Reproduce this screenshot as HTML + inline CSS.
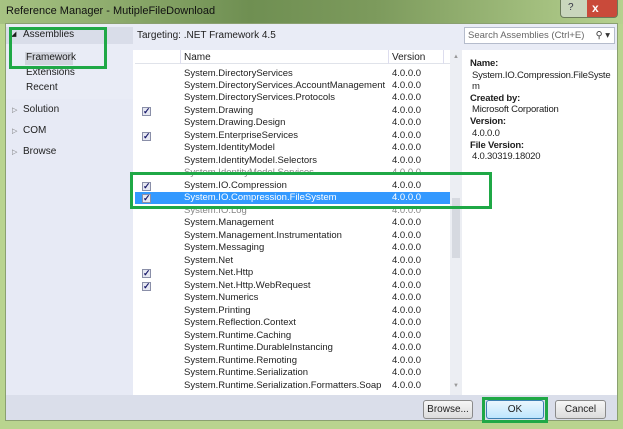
<!DOCTYPE html>
<html><head><meta charset="utf-8"><style>
*{margin:0;padding:0;box-sizing:border-box}
body{width:623px;height:429px;overflow:hidden;background:#b9d48f;font-family:"Liberation Sans",sans-serif;font-size:10px;color:#1e1e1e;position:relative}
.abs{position:absolute}
.title{left:0;top:0;width:623px;height:24px;background:linear-gradient(90deg,#a7c383,#6f8f52 40%,#7c9a5c 60%,#b6d18f);}
.title span{position:absolute;left:6px;top:5px;font-size:11px;color:#111}
.client{left:5px;top:23px;width:613px;height:398px;background:#fff;border:1px solid #8aa070}
.left{left:6px;top:24px;width:127px;height:371px;background:#e9ecf6}
.bottom{left:6px;top:395px;width:611px;height:25px;background:#dadeea}
.row{position:absolute;left:184px;height:12.5px;line-height:12.5px;font-size:9.5px;white-space:nowrap}
.ver{position:absolute;left:392px;height:12.5px;line-height:12.5px;font-size:9.5px}
.cb{position:absolute;left:142px;width:9px;height:9px;border:1px solid #8a8fa8;background:#e6e8f2;font-size:9px;line-height:7px;text-align:center;color:#1a1a6a;font-weight:bold}
.btn{position:absolute;top:400px;height:19px;border:1px solid #8a8a8a;border-radius:3px;background:linear-gradient(#f6f6f6,#dcdcdc);font-size:10px;text-align:center;line-height:17px}
.green{position:absolute;border:3px solid #1fa846}
.nav{position:absolute;font-size:10px}
.d{position:absolute;font-size:9.5px;letter-spacing:-0.2px;white-space:nowrap}
.b{font-weight:bold}
</style></head><body>
<div class="abs title"><span>Reference Manager - MutipleFileDownload</span></div>
<div class="abs" style="left:560px;top:0;width:58px;height:18px;border:1px solid #6a7a5a;border-top:none;border-radius:0 0 4px 4px;background:linear-gradient(90deg,#c9d6bd 0 26px,#c94a3a 26px)"></div>
<div class="abs" style="left:568px;top:2px;font-size:10px;color:#334">?</div>
<div class="abs" style="left:592px;top:1px;font-size:12px;color:#fff;font-weight:bold">x</div>
<div class="abs client"></div>
<div class="abs left"></div>
<div class="abs" style="left:6px;top:27px;width:127px;height:17px;background:#d9dde9"></div>
<div class="nav" style="left:11px;top:30px;font-size:7px">◢</div>
<div class="nav" style="left:23px;top:29px">Assemblies</div>
<div class="abs" style="left:25px;top:52px;width:48px;height:13px;background:#d2d5de"></div>
<div class="nav" style="left:26px;top:52px">Framework</div>
<div class="nav" style="left:26px;top:67px">Extensions</div>
<div class="nav" style="left:26px;top:82px">Recent</div>
<div class="abs" style="left:6px;top:99px;width:127px;height:296px;background:#e7eaf5"></div>
<div class="nav" style="left:12px;top:106px;font-size:7px;color:#777">▷</div><div class="nav" style="left:23px;top:104px">Solution</div>
<div class="nav" style="left:12px;top:127px;font-size:7px;color:#777">▷</div><div class="nav" style="left:23px;top:125px">COM</div>
<div class="nav" style="left:12px;top:148px;font-size:7px;color:#777">▷</div><div class="nav" style="left:23px;top:146px">Browse</div>
<div class="abs" style="left:133px;top:24px;width:330px;height:26px;background:#e9ecf6"></div>
<div class="nav" style="left:137px;top:30px">Targeting: .NET Framework 4.5</div>
<div class="abs" style="left:463px;top:24px;width:154px;height:26px;background:#e9ecf6"></div>
<div class="abs" style="left:464px;top:27px;width:151px;height:17px;background:#fff;border:1px solid #b5bccc;font-size:9.5px;color:#666;padding:2px 3px">Search Assemblies (Ctrl+E)<span style="position:absolute;right:4px;color:#333">⚲ ▾</span></div>
<div class="abs" style="left:135px;top:50px;width:315px;height:14px;background:#fff;border-bottom:1px solid #e0e3ea"></div>
<div class="abs" style="left:180px;top:50px;width:1px;height:14px;background:#dde"></div>
<div class="abs" style="left:388px;top:50px;width:1px;height:14px;background:#dde"></div>
<div class="abs" style="left:443px;top:50px;width:1px;height:14px;background:#dde"></div>
<div class="nav" style="left:184px;top:52px">Name</div>
<div class="nav" style="left:392px;top:52px">Version</div>
<div class="abs" style="left:450px;top:50px;width:12px;height:345px;background:#eceef3"></div>
<div class="abs" style="left:453px;top:54px;font-size:6px;color:#999">▲</div>
<div class="abs" style="left:453px;top:383px;font-size:6px;color:#999">▼</div>
<div class="abs" style="left:452px;top:198px;width:8px;height:60px;background:#d6d9e0"></div>
<div class="abs" style="left:135px;top:192px;width:315px;height:12px;background:#3399ff"></div>
<div id="rows"></div>
<div class="d b" style="left:470px;top:58px">Name:</div>
<div class="d" style="left:472px;top:70px">System.IO.Compression.FileSyste</div>
<div class="d" style="left:472px;top:81px">m</div>
<div class="d b" style="left:470px;top:93px">Created by:</div>
<div class="d" style="left:472px;top:104px">Microsoft Corporation</div>
<div class="d b" style="left:470px;top:116px">Version:</div>
<div class="d" style="left:472px;top:128px">4.0.0.0</div>
<div class="d b" style="left:470px;top:140px">File Version:</div>
<div class="d" style="left:472px;top:151px">4.0.30319.18020</div>
<div class="abs bottom"></div>
<div class="btn" style="left:423px;width:50px">Browse...</div>
<div class="btn" style="left:486px;width:58px;background:linear-gradient(#eaf6fd,#bee6fd);border-color:#3c7fb1">OK</div>
<div class="btn" style="left:555px;width:51px">Cancel</div>
<div class="green" style="left:9px;top:27px;width:98px;height:42px"></div>
<div class="green" style="left:130px;top:172px;width:362px;height:37px"></div>
<div class="green" style="left:482px;top:397px;width:66px;height:26px"></div>
<script>
var n=["System.DirectoryServices","System.DirectoryServices.AccountManagement","System.DirectoryServices.Protocols","System.Drawing","System.Drawing.Design","System.EnterpriseServices","System.IdentityModel","System.IdentityModel.Selectors","System.IdentityModel.Services","System.IO.Compression","System.IO.Compression.FileSystem","System.IO.Log","System.Management","System.Management.Instrumentation","System.Messaging","System.Net","System.Net.Http","System.Net.Http.WebRequest","System.Numerics","System.Printing","System.Reflection.Context","System.Runtime.Caching","System.Runtime.DurableInstancing","System.Runtime.Remoting","System.Runtime.Serialization","System.Runtime.Serialization.Formatters.Soap"];
var ck=[3,5,9,10,16,17],h="";
for(var i=0;i<n.length;i++){var y=67.5+i*12.48;var c=i==10?"color:#fff":"";if(i==8||i==11)c="color:#333;opacity:.6";
h+='<div class="row" style="top:'+y+'px;'+c+'">'+n[i]+'</div><div class="ver" style="top:'+y+'px;'+c+'">4.0.0.0</div>';
if(ck.indexOf(i)>=0)h+='<div class="cb" style="top:'+(y+2)+'px">✓</div>';}
document.getElementById("rows").innerHTML=h;
</script>
</body></html>
